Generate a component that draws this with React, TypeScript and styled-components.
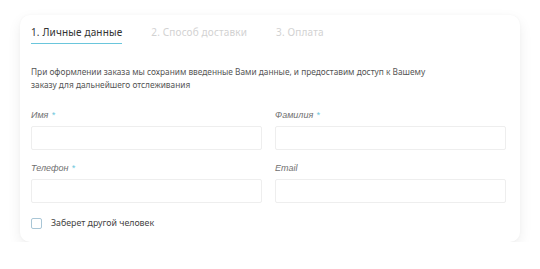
import React, { useState } from 'react'
import styled, { createGlobalStyle } from 'styled-components'

const GlobalStyle = createGlobalStyle`
  html, body {
    margin: 0;
    padding: 0;
    background: #fff;
  }
  body {
    font-family: 'Noto Sans', 'Open Sans', sans-serif;
    color: #333;
  }
`

const Page = styled.div`
  padding: 15px 20px 0 20px;
`

const Card = styled.div`
  width: 500px;
  box-sizing: border-box;
  background: #fff;
  border-radius: 10px;
  box-shadow: 0 5px 14px rgba(0, 0, 0, 0.07), 0 0 3px rgba(0, 0, 0, 0.03);
  padding: 0 14px 13px 11px;
`

const Tabs = styled.div`
  display: flex;
  gap: 29px;
`

const Tab = styled.div<{ active?: boolean }>`
  font-size: 10px;
  line-height: 14px;
  padding: 10px 0 4px;
  color: ${p => (p.active ? '#333' : '#d2d2d2')};
  border-bottom: 1.5px solid ${p => (p.active ? '#6ac6dc' : 'transparent')};
  letter-spacing: 0.15px;
`

const Intro = styled.p`
  margin: 21px 0 0;
  font-size: 8.3px;
  line-height: 13px;
  color: #555;
  max-width: 400px;
`

const Grid = styled.div`
  display: grid;
  grid-template-columns: 231px 231px;
  column-gap: 13px;
  row-gap: 13px;
  margin-top: 19px;
`

const Field = styled.label`
  display: flex;
  flex-direction: column;
  gap: 6px;
`

const Label = styled.span`
  font-family: 'Liberation Sans', Arial, sans-serif;
  font-size: 9px;
  line-height: 10px;
  font-style: italic;
  color: #707070;
`

const Star = styled.span`
  color: #6ac6dc;
  margin-left: 3px;
`

const Input = styled.input`
  box-sizing: border-box;
  height: 24px;
  width: 100%;
  border: 1px solid #eeeeee;
  border-radius: 2px;
  background: #fff;
  outline: none;
  padding: 0 8px;
  font: inherit;
  font-size: 9px;
`

const CheckRow = styled.label`
  display: flex;
  align-items: center;
  gap: 9px;
  margin-top: 15px;
  font-size: 8.8px;
  line-height: 11px;
  color: #444;
  cursor: pointer;
`

const Box = styled.span<{ checked: boolean }>`
  width: 11px;
  height: 11px;
  box-sizing: border-box;
  border: 1px solid #a9c6d6;
  border-radius: 2px;
  background: ${p => (p.checked ? '#6ac6dc' : '#fff')};
`

const fields = [
  { name: 'Имя', required: true },
  { name: 'Фамилия', required: true },
  { name: 'Телефон', required: true },
  { name: 'Email', required: false },
]

export default function App() {
  const [other, setOther] = useState(false)

  return (
    <Page>
      <GlobalStyle />
      <Card>
        <Tabs>
          <Tab active>1. Личные данные</Tab>
          <Tab>2. Способ доставки</Tab>
          <Tab>3. Оплата</Tab>
        </Tabs>
        <Intro>
          При оформлении заказа мы сохраним введенные Вами данные, и предоставим доступ к Вашему заказу для
          дальнейшего отслеживания
        </Intro>
        <Grid>
          {fields.map(f => (
            <Field key={f.name}>
              <Label>
                {f.name}
                {f.required && <Star>*</Star>}
              </Label>
              <Input type="text" />
            </Field>
          ))}
        </Grid>
        <CheckRow onClick={() => setOther(!other)}>
          <Box checked={other} />
          Заберет другой человек
        </CheckRow>
      </Card>
    </Page>
  )
}
